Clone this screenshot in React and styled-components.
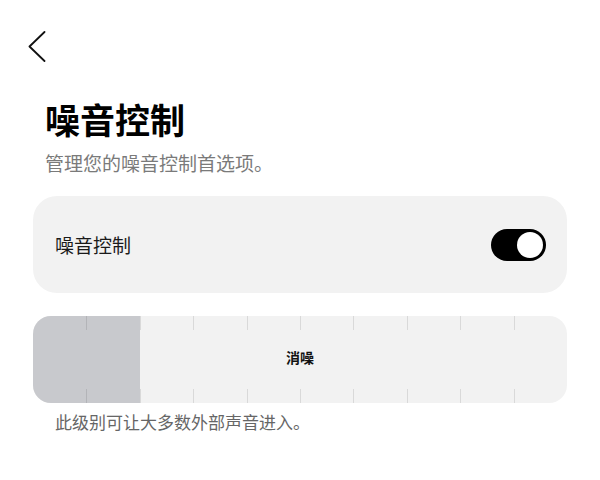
import React, { useState } from "react";
import styled, { createGlobalStyle } from "styled-components";

const GlobalStyle = createGlobalStyle`
  html, body {
    margin: 0;
    padding: 0;
    background: #ffffff;
  }
  body {
    font-family: "Noto Sans CJK SC", "Noto Sans", sans-serif;
    color: #000;
  }
`;

const levels = 10;

const App = () => {
  const [enabled, setEnabled] = useState(true);
  const [level, setLevel] = useState(2);

  return (
    <Page>
      <GlobalStyle />
      <TopBar>
        <BackButton aria-label="返回">
          <svg width="18" height="31" viewBox="0 0 18 31" fill="none">
            <path
              d="M16.5 1 L1.5 15.5 L16.5 30"
              stroke="#111"
              strokeWidth="1.8"
              strokeLinecap="round"
              strokeLinejoin="round"
            />
          </svg>
        </BackButton>
      </TopBar>
      <Heading>
        <Title>噪音控制</Title>
        <Subtitle>管理您的噪音控制首选项。</Subtitle>
      </Heading>
      <SettingCard>
        <SettingLabel>噪音控制</SettingLabel>
        <Toggle $on={enabled} onClick={() => setEnabled(!enabled)}>
          <Knob $on={enabled} />
        </Toggle>
      </SettingCard>
      <Track>
        <Segments>
          {Array.from({ length: levels }).map((_, i) => (
            <Segment
              key={i}
              $active={i < level}
              $first={i === 0}
              onClick={() => setLevel(i + 1)}
            />
          ))}
        </Segments>
        <TrackLabel>消噪</TrackLabel>
      </Track>
      <Note>此级别可让大多数外部声音进入。</Note>
    </Page>
  );
};

export default App;

const Page = styled.div`
  width: 600px;
  min-height: 480px;
  box-sizing: border-box;
  padding: 0 33px;
  display: flex;
  flex-direction: column;
`;

const TopBar = styled.div`
  display: flex;
  align-items: center;
  padding-top: 31px;
  height: 31px;
`;

const BackButton = styled.button`
  border: none;
  background: none;
  padding: 0;
  margin-left: -5px;
  display: flex;
  cursor: pointer;
`;

const Heading = styled.div`
  display: flex;
  flex-direction: column;
  padding: 0 12px;
  margin-top: 37px;
`;

const Title = styled.h1`
  margin: 0;
  font-size: 35px;
  line-height: 40px;
  font-weight: 700;
  color: #000;
`;

const Subtitle = styled.p`
  margin: 12px 0 0;
  font-size: 19px;
  line-height: 24px;
  color: #7a7a7a;
`;

const SettingCard = styled.div`
  margin-top: 21px;
  height: 97px;
  box-sizing: border-box;
  background: #f2f2f2;
  border-radius: 24px;
  padding: 0 21px 0 22px;
  display: flex;
  align-items: center;
  justify-content: space-between;
`;

const SettingLabel = styled.span`
  font-size: 19px;
  line-height: 24px;
  color: #1a1a1a;
`;

const Toggle = styled.div`
  width: 55px;
  height: 32px;
  border-radius: 16px;
  background: ${(p) => (p.$on ? "#000" : "#c8c9cd")};
  display: flex;
  align-items: center;
  justify-content: ${(p) => (p.$on ? "flex-end" : "flex-start")};
  padding: 0 3px;
  box-sizing: border-box;
  cursor: pointer;
`;

const Knob = styled.div`
  width: 26px;
  height: 26px;
  border-radius: 50%;
  background: #fff;
`;

const Track = styled.div`
  margin-top: 23px;
  height: 87px;
  border-radius: 18px;
  overflow: hidden;
  background: #f2f2f2;
  display: grid;
  align-items: center;
  justify-items: center;
`;

const Segments = styled.div`
  grid-area: 1 / 1;
  align-self: stretch;
  justify-self: stretch;
  display: flex;
`;

const Segment = styled.div`
  flex: 1;
  position: relative;
  background: ${(p) => (p.$active ? "#c8c9cd" : "transparent")};
  cursor: pointer;

  &::before,
  &::after {
    content: "";
    display: ${(p) => (p.$first ? "none" : "block")};
    position: absolute;
    left: 0;
    width: 1px;
    height: 14px;
    background: rgba(0, 0, 0, 0.1);
  }
  &::before {
    top: 0;
  }
  &::after {
    bottom: 0;
  }
`;

const TrackLabel = styled.span`
  grid-area: 1 / 1;
  pointer-events: none;
  margin-bottom: 6px;
  font-size: 14px;
  line-height: 18px;
  font-weight: 700;
  color: #111;
`;

const Note = styled.p`
  margin: 8px 0 0;
  padding: 0 22px;
  font-size: 17px;
  line-height: 22px;
  color: #666;
`;
